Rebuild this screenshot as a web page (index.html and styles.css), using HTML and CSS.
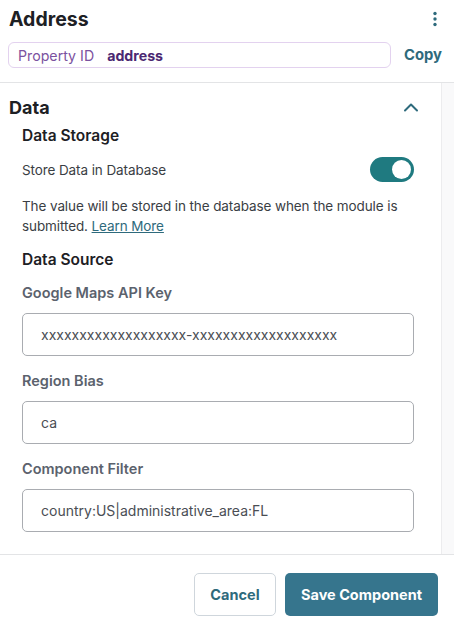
FILE: index.html
```html
<!DOCTYPE html>
<html lang="en">
<head>
    <meta charset="UTF-8">
    <title>Address Component</title>
    <link rel="stylesheet" href="styles.css">
</head>
<body>

    <div class="header">
        <div class="title-row">
            <h1>Address</h1>
            <svg class="kebab" width="6" height="16" viewBox="0 0 6 16">
                <circle cx="3" cy="2.5" r="1.7"/>
                <circle cx="3" cy="8" r="1.7"/>
                <circle cx="3" cy="13.5" r="1.7"/>
            </svg>
        </div>
        <div class="prop-row">
            <div class="prop-box">
                <span class="prop-label">Property ID</span>
                <span class="prop-value">address</span>
            </div>
            <span class="copy">Copy</span>
        </div>
    </div>

    <div class="main">
        <div class="content">
            <div class="section-head">
                <h2>Data</h2>
                <svg class="chevron" width="16" height="10" viewBox="0 0 16 10">
                    <path d="M2 8.5 L8 2.5 L14 8.5" fill="none" stroke-width="2" stroke-linecap="round" stroke-linejoin="round"/>
                </svg>
            </div>

            <div class="group">
                <h3>Data Storage</h3>
                <div class="toggle-row">
                    <span>Store Data in Database</span>
                    <div class="toggle"><div class="knob"></div></div>
                </div>
                <p class="help">The value will be stored in the database when the module is submitted. <a href="#">Learn More</a></p>

                <h3 class="source">Data Source</h3>

                <label>Google Maps API Key</label>
                <div class="input">xxxxxxxxxxxxxxxxxxx-xxxxxxxxxxxxxxxxxxx</div>

                <label>Region Bias</label>
                <div class="input">ca</div>

                <label>Component Filter</label>
                <div class="input">country:US|administrative_area:FL</div>
            </div>
        </div>
        <div class="track"></div>
    </div>

    <div class="footer">
        <button class="cancel">Cancel</button>
        <button class="save">Save Component</button>
    </div>

</body>
</html>
```

FILE: styles.css
```css
body { margin: 0; width: 454px; height: 624px; overflow: hidden; font-family: Inter, "Noto Sans", sans-serif; background: white; color: #23272d; }
.header { padding: 0 12px 0 8px; border-bottom: 1px solid #e3e4e6; height: 83px; box-sizing: border-box; }
.title-row { display: flex; justify-content: space-between; align-items: center; height: 38px; }
h1 { margin: 0 0 0 1px; font-size: 19.5px; font-weight: 700; color: #1d2024; }
.kebab { fill: #2e6a7c; margin-right: 4px; }
.prop-row { display: flex; align-items: center; gap: 13px; margin-top: 4px; }
.prop-box { width: 385px; height: 26px; box-sizing: border-box; border: 1px solid #e3d2ef; border-radius: 6px; display: flex; align-items: center; padding-left: 9px; font-size: 14.2px; }
.prop-label { color: #7b52a0; }
.prop-value { color: #4b2872; font-weight: 700; margin-left: 13px; }
.copy { color: #2e6a7c; font-weight: 700; font-size: 14.8px; }
.main { display: flex; height: 472px; border-bottom: 1px solid #e3e4e6; box-sizing: border-box; }
.content { flex: 1; padding: 12px 27px 0 9px; }
.track { width: 12px; background: #f9f9fa; border-left: 1px solid #ececee; }
.section-head { display: flex; justify-content: space-between; align-items: center; height: 24px; }
h2 { margin: 0; font-size: 18px; font-weight: 700; color: #1d2024; }
.chevron { stroke: #2e6a7c; margin-right: -5px; }
.group { padding-left: 13px; }
h3 { margin: 6px 0 0; font-size: 15.5px; font-weight: 600; line-height: 22px; color: #1d2024; }
.toggle-row { display: flex; justify-content: space-between; align-items: center; margin-top: 10px; font-size: 13.5px; letter-spacing: -0.1px; color: #3a3e44; }
.toggle { width: 44px; height: 25px; border-radius: 13px; background: #1f7a80; display: flex; align-items: center; justify-content: flex-end; padding-right: 3px; box-sizing: border-box; }
.knob { width: 19px; height: 19px; border-radius: 50%; background: white; }
.help { margin: 14px 0 0; font-size: 13.5px; letter-spacing: -0.1px; line-height: 20px; color: #3a3e44; }
.help a { color: #2e6a7c; }
h3.source { margin-top: 13px; }
label { display: block; margin-top: 11px; font-size: 14.5px; font-weight: 600; line-height: 22px; color: #5b626d; }
.input { margin-top: 9px; height: 43px; box-sizing: border-box; border: 1px solid #a9acb1; border-radius: 5px; display: flex; align-items: center; padding-left: 18px; font-size: 14px; color: #4a4e54; }
.input + label { margin-top: 14px; }
.footer { display: flex; justify-content: flex-end; gap: 9px; padding: 18px 16px 0 0; }
button { height: 43px; border-radius: 5px; font-family: Inter, sans-serif; font-size: 14.5px; font-weight: 700; cursor: pointer; }
.cancel { width: 82px; background: white; color: #2e6a7c; border: 1px solid #cfd6dc; }
.save { width: 153px; background: #36758d; color: white; border: none; }
```
